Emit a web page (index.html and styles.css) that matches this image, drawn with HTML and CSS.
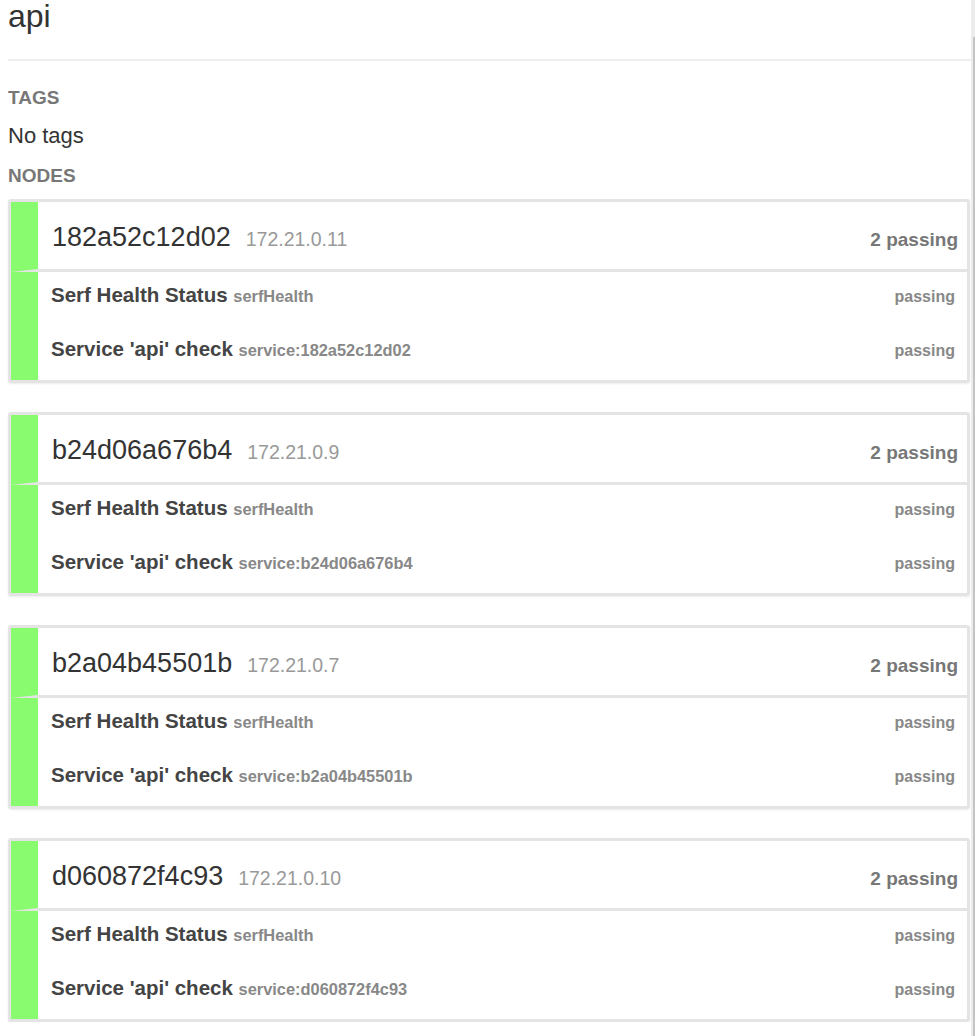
FILE: index.html
```html
<!DOCTYPE html>
<html lang="en">
  <head>
    <meta charset="UTF-8">
    <meta name="viewport" content="width=device-width, initial-scale=1.0">
    <title>api - Services</title>
    <link rel="stylesheet" href="styles.css">
  </head>
  <body>
    <div class="page">
      <div class="page-head">
        <h1>api</h1>
      </div>

      <h4 class="section-label tags-label">Tags</h4>
      <p class="no-tags">No tags</p>

      <h4 class="section-label">Nodes</h4>
      <div class="node-list">

        <div class="node-card">
          <div class="node-head bar-passing">
            <span class="node-name">182a52c12d02</span>
            <span class="node-addr">172.21.0.11</span>
            <span class="node-summary">2 passing</span>
          </div>
          <ul class="check-list bar-passing">
            <li class="check">
              <span class="check-name">Serf Health Status <small class="check-id">serfHealth</small></span>
              <span class="check-status">passing</span>
            </li>
            <li class="check">
              <span class="check-name">Service 'api' check <small class="check-id">service:182a52c12d02</small></span>
              <span class="check-status">passing</span>
            </li>
          </ul>
        </div>

        <div class="node-card">
          <div class="node-head bar-passing">
            <span class="node-name">b24d06a676b4</span>
            <span class="node-addr">172.21.0.9</span>
            <span class="node-summary">2 passing</span>
          </div>
          <ul class="check-list bar-passing">
            <li class="check">
              <span class="check-name">Serf Health Status <small class="check-id">serfHealth</small></span>
              <span class="check-status">passing</span>
            </li>
            <li class="check">
              <span class="check-name">Service 'api' check <small class="check-id">service:b24d06a676b4</small></span>
              <span class="check-status">passing</span>
            </li>
          </ul>
        </div>

        <div class="node-card">
          <div class="node-head bar-passing">
            <span class="node-name">b2a04b45501b</span>
            <span class="node-addr">172.21.0.7</span>
            <span class="node-summary">2 passing</span>
          </div>
          <ul class="check-list bar-passing">
            <li class="check">
              <span class="check-name">Serf Health Status <small class="check-id">serfHealth</small></span>
              <span class="check-status">passing</span>
            </li>
            <li class="check">
              <span class="check-name">Service 'api' check <small class="check-id">service:b2a04b45501b</small></span>
              <span class="check-status">passing</span>
            </li>
          </ul>
        </div>

        <div class="node-card">
          <div class="node-head bar-passing">
            <span class="node-name">d060872f4c93</span>
            <span class="node-addr">172.21.0.10</span>
            <span class="node-summary">2 passing</span>
          </div>
          <ul class="check-list bar-passing">
            <li class="check">
              <span class="check-name">Serf Health Status <small class="check-id">serfHealth</small></span>
              <span class="check-status">passing</span>
            </li>
            <li class="check">
              <span class="check-name">Service 'api' check <small class="check-id">service:d060872f4c93</small></span>
              <span class="check-status">passing</span>
            </li>
          </ul>
        </div>

      </div>
    </div>
    <div class="scroll-track"><div class="scroll-thumb"></div></div>
  </body>
</html>
```

FILE: styles.css
```css
body {
    margin: 0;
    background: #fff;
    color: #333;
    font-family: "Liberation Sans", Arial, sans-serif;
}
.page {
    padding: 0 4px 0 8px;
}
.page-head {
    border-bottom: 2px solid #eee;
    padding-bottom: 23px;
}
h1 {
    margin: -4px 0 0;
    font-size: 32px;
    line-height: 40px;
    font-weight: normal;
    color: #333;
}
.section-label {
    margin: 0;
    font-size: 19px;
    line-height: 20px;
    font-weight: bold;
    text-transform: uppercase;
    color: #777;
}
.tags-label {
    margin-top: 27px;
}
.no-tags {
    margin: 15px 0 18px;
    font-size: 22px;
    line-height: 25px;
}
.node-list {
    margin: 13px 1px 0 0;
    display: flex;
    flex-direction: column;
    gap: 29px;
}
.node-card {
    border: 3px solid #e4e4e4;
    border-radius: 3px;
    box-shadow: 0 1px 2px rgba(0,0,0,0.08);
}
.bar-passing {
    border-left: 27px solid #88fc6e;
}
.node-head {
    display: flex;
    align-items: baseline;
    height: 70px;
    padding: 20px 9px 0 14px;
    box-sizing: border-box;
    border-bottom: 3px solid #e4e4e4;
}
.node-name {
    font-size: 27px;
    line-height: 31px;
    color: #333;
}
.node-addr {
    margin-left: 15px;
    font-size: 19.5px;
    color: #999;
}
.node-summary {
    margin-left: auto;
    font-size: 19px;
    font-weight: bold;
    color: #777;
}
.check-list {
    list-style: none;
    margin: 0;
    padding: 0;
}
.check {
    display: flex;
    align-items: baseline;
    height: 54px;
    box-sizing: border-box;
    padding: 12px 12px 0 13px;
    line-height: 22px;
}
.check-name {
    font-size: 20.5px;
    font-weight: bold;
    color: #444;
}
.check-id {
    font-size: 16.4px;
    color: #888;
}
.check-status {
    margin-left: auto;
    font-size: 16px;
    font-weight: bold;
    color: #888;
}
.scroll-track {
    position: fixed;
    top: 0;
    right: 0;
    width: 4px;
    height: 100%;
    background: #ececec;
}
.scroll-thumb {
    margin: 37px 0 0 2px;
    height: 999px;
    background: #c4c4c4;
}
```
